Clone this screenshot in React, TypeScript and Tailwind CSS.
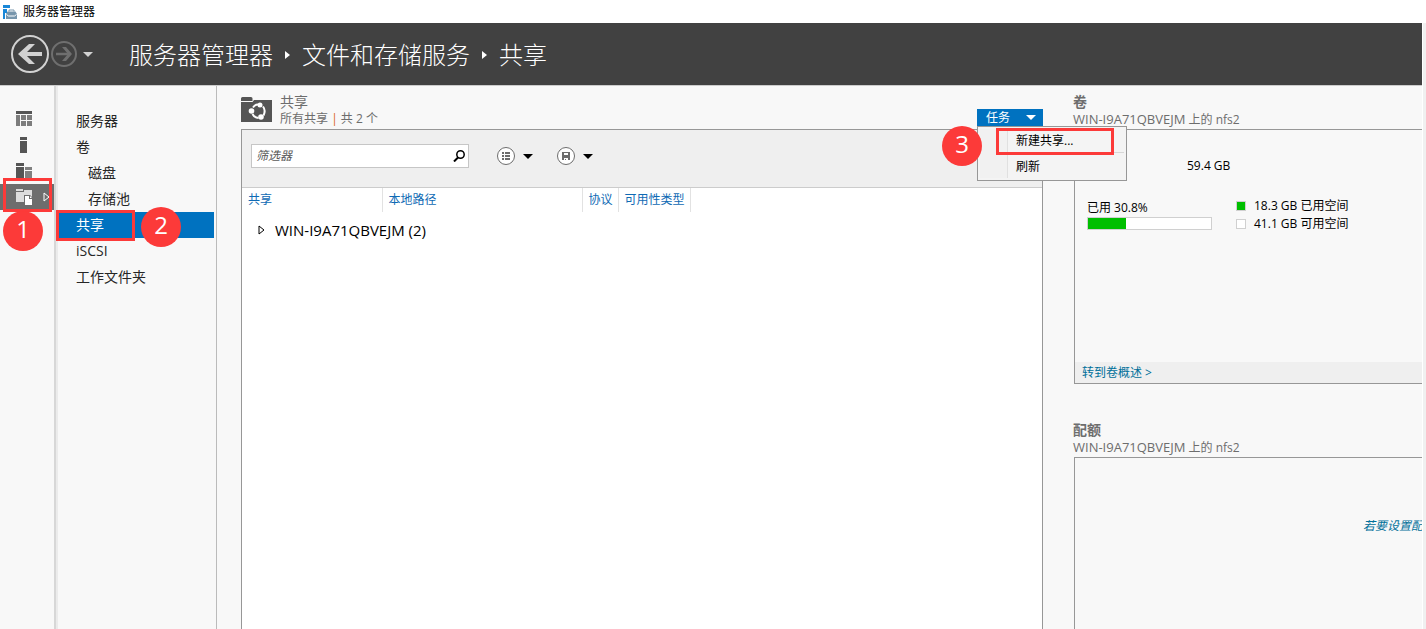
import React, { useState } from 'react';

interface NavItem {
  label: string;
  nested?: boolean;
}

const navItems: NavItem[] = [
  { label: '服务器' },
  { label: '卷' },
  { label: '磁盘', nested: true },
  { label: '存储池', nested: true },
  { label: '共享' },
  { label: 'iSCSI' },
  { label: '工作文件夹' },
];

const AppIcon = () => (
  <svg width="16" height="16" viewBox="0 0 16 16" aria-hidden="true">
    <path d="M1 1h7v3H1zM1 5h4v10H1z" fill="#1a87d7" />
    <path d="M3 15V9h2V6h9v3h1.500v6z" fill="#fff" />
    <path d="M4 10l1.500-2.500h8L15 10v5H4z" fill="#7896ac" />
    <path d="M7 7.500V6h5v1.500" stroke="#7896ac" fill="none" />
    <path d="M4.500 10.500l2 1.500h6l2-1.500" stroke="#fff" fill="none" />
  </svg>
);

const DashboardIcon = () => (
  <svg width="16" height="16" viewBox="0 0 16 16" aria-hidden="true">
    <path d="M0 0h16v3H0z" fill="#555" />
    <path d="M0 4h4v11H0zM5 4h5v5H5zM11 4h5v5h-5zM5 10h5v5H5zM11 10h5v5h-5z" fill="#7d7d7d" />
  </svg>
);

const ServerIcon = () => (
  <svg width="16" height="16" viewBox="0 0 16 16" aria-hidden="true">
    <path d="M4 0h7v3H4zM4 4h7v12H4z" fill="#555" />
  </svg>
);

const AllServersIcon = () => (
  <svg width="16" height="16" viewBox="0 0 16 16" aria-hidden="true">
    <path d="M0 0h8v3H0zM0 4h8v12H0z" fill="#555" />
    <path d="M9 4h7v3H9zM9 8h7v8H9z" fill="#808080" />
  </svg>
);

const StorageIcon = () => (
  <svg width="16" height="16" viewBox="0 0 16 16" aria-hidden="true">
    <path d="M0 0h7v2H0zM0 3h8V1h8v12H0z" fill="#dcdcdc" />
    <path d="M8 6h6l3 3v8H8z" fill="#6d6d6d" />
    <path d="M9 7h4v3h3v6H9z" fill="#fff" />
    <path d="M14 7l2 2h-2z" fill="#fff" />
  </svg>
);

const SharesIcon = () => (
  <svg width="31" height="25" viewBox="0 0 31 25" aria-hidden="true">
    <path d="M0 1.500Q0 0 1.500 0H10q1.500 0 1.500 1.500V4H0zM0 5h11.500l1.500-2h18v22H0z" fill="#555" />
    <g fill="none" stroke="#fff" strokeWidth="2">
      <path d="M12 10.500Q14 7.500 17 7.500" />
      <path d="M22 9.500q3 4 0.500 9" />
      <path d="M11.500 17q2 4 6 4" />
    </g>
    <circle cx="19" cy="8" r="2.500" fill="#fff" />
    <circle cx="10.500" cy="14" r="2.800" fill="#fff" />
    <circle cx="20" cy="20" r="2.800" fill="#fff" />
  </svg>
);

const BackIcon = () => (
  <svg width="38" height="38" viewBox="0 0 38 38" fill="none" aria-hidden="true">
    <circle cx="19" cy="19" r="18" stroke="#d2d2d2" strokeWidth="2" />
    <path d="M9 19h22" stroke="#d2d2d2" strokeWidth="4" />
    <path d="M18 9h6L14 19l10 10h-6L7 19z" fill="#d2d2d2" />
  </svg>
);

const ForwardIcon = () => (
  <svg width="26" height="26" viewBox="0 0 26 26" fill="none" aria-hidden="true">
    <circle cx="13" cy="13" r="12" stroke="#6f6f6f" strokeWidth="2" />
    <path d="M5 13h14" stroke="#6f6f6f" strokeWidth="2.500" />
    <path d="M11 6h4l6 7-6 7h-4l6-7z" fill="#6f6f6f" />
  </svg>
);

const DownArrow = ({ className }: { className?: string }) => (
  <svg width="10" height="5" viewBox="0 0 10 5" className={className} aria-hidden="true">
    <path d="M0 0h10L5 5z" fill="currentColor" />
  </svg>
);

const Crumb = () => (
  <svg width="5" height="8" viewBox="0 0 5 8" className="mx-3" aria-hidden="true">
    <path d="M0 0l5 4-5 4z" fill="#fff" />
  </svg>
);

const Badge = ({ n, className }: { n: number; className: string }) => (
  <span
    className={`absolute z-20 flex size-10 items-center justify-center rounded-full bg-[#fc3a39] pb-1 text-2xl text-white ${className}`}
  >
    {n}
  </span>
);

const PanelHeading = ({ title }: { title: string }) => (
  <div className="h-[35px] shrink-0 text-[#6d6d6d]">
    <h2 className="text-sm/4 font-bold">{title}</h2>
    <p className="text-xs/[18px]">
      <span className="text-[13px]">WIN-I9A71QBVEJM</span> 上的 nfs2
    </p>
  </div>
);

export default function App() {
  const [filter, setFilter] = useState('');
  const [selected, setSelected] = useState('共享');

  return (
    <div className="flex h-screen flex-col overflow-hidden bg-white font-['Open_Sans','Noto_Sans_CJK_SC',sans-serif] text-black">
      {/* Title bar */}
      <div className="flex h-[23px] shrink-0 items-center gap-[5px] pl-[2px] text-xs">
        <AppIcon />
        <span>服务器管理器</span>
      </div>

      <div className="flex min-h-0 flex-1 bg-[#f0f0f0] pr-[3px]">
        <div className="flex min-w-0 flex-1 flex-col border-r border-white">
          {/* Navigation header */}
          <header className="flex h-[62px] shrink-0 items-center bg-[#414141] pl-[11px] text-white">
            <button aria-label="后退"><BackIcon /></button>
            <button aria-label="前进" className="ml-[2px]"><ForwardIcon /></button>
            <button aria-label="历史记录" className="ml-[6px] text-[#d2d2d2]"><DownArrow /></button>
            <nav className="ml-9 flex items-center pt-[2px] text-2xl font-light">
              <a href="#dashboard">服务器管理器</a>
              <Crumb />
              <a href="#storage">文件和存储服务</a>
              <Crumb />
              <a href="#shares">共享</a>
            </nav>
          </header>

          <div className="flex min-h-0 flex-1 border-t border-[#ccc] bg-[#f8f8f8]">
            {/* Icon rail */}
            <div className="relative w-[54px] shrink-0 pt-5">
              <button aria-label="仪表板" className="flex h-[26px] w-full items-center pl-4"><DashboardIcon /></button>
              <button aria-label="本地服务器" className="flex h-[26px] w-full items-center pl-4"><ServerIcon /></button>
              <button aria-label="所有服务器" className="flex h-[26px] w-full items-center pl-4"><AllServersIcon /></button>
              <button aria-label="文件和存储服务" className="flex h-[26px] w-full items-center justify-between bg-[#6d6d6d] pr-1 pl-4">
                <StorageIcon />
                <svg width="7" height="10" viewBox="0 0 7 10" fill="none" aria-hidden="true">
                  <path d="M1 1l5 4-5 4z" stroke="#fff" />
                </svg>
              </button>
              <span className="absolute top-[92px] left-[3px] z-10 h-[34px] w-[49px] border-3 border-[#fc3a39]" />
              <Badge n={1} className="top-[125px] left-[3px]" />
            </div>
            <div className="w-1 shrink-0 border-r-2 border-l-2 border-r-[#ebebeb] border-l-[#d7d7d7]" />

            {/* Side menu */}
            <nav className="relative w-[159px] shrink-0 border-r border-[#bbb] pt-[22px] pr-[2px]">
              {navItems.map((item) => (
                <button
                  key={item.label}
                  onClick={() => setSelected(item.label)}
                  className={`block h-[26px] w-full text-left text-sm ${item.nested ? 'pl-[30px]' : 'pl-[18px]'} ${
                    selected === item.label ? 'bg-[#0072c0] text-white' : 'text-[#262626]'
                  }`}
                >
                  {item.label}
                </button>
              ))}
              <span className="absolute top-[124px] -left-[2px] z-10 h-[31px] w-[79px] border-3 border-[#fc3a39]" />
              <Badge n={2} className="top-[121px] left-[83px]" />
            </nav>

            <div className="flex min-w-0 flex-1 gap-[30px] pt-2 pl-6">
              {/* Shares */}
              <section className="relative flex min-w-0 flex-1 flex-col">
                <div className="flex h-[35px] shrink-0 gap-2">
                  <div className="pt-[3px]"><SharesIcon /></div>
                  <div className="text-[#6d6d6d]">
                    <h2 className="text-sm/4">共享</h2>
                    <p className="text-xs/[18px]">所有共享 <span className="text-[#d9632a]">|</span> 共 2 个</p>
                  </div>
                </div>

                <div className="flex-1 border-x border-t border-[#979797] bg-white">
                  <div className="flex h-[58px] items-start border-b border-[#ccc] bg-[#efefef] pt-[14px] pl-[9px]">
                    <div className="flex h-6 w-[218px] items-center border border-[#c6c6c6] bg-white pr-[3px]">
                      <input
                        aria-label="筛选器"
                        placeholder="筛选器"
                        value={filter}
                        onChange={(e) => setFilter(e.target.value)}
                        className="min-w-0 flex-1 pl-1 text-xs italic outline-none placeholder:text-[#595959]"
                      />
                      <svg width="12" height="12" viewBox="0 0 12 12" fill="none" stroke="#000" aria-hidden="true">
                        <circle cx="7.500" cy="4.500" r="3.700" strokeWidth="1.500" />
                        <path d="M5 7.500L1 11.500" strokeWidth="2" />
                      </svg>
                    </div>
                    <button aria-label="查询条件" className="ml-7 flex h-6 items-center gap-2">
                      <svg width="18" height="18" viewBox="0 0 18 18" aria-hidden="true">
                        <circle cx="9" cy="9" r="8.500" fill="#fff" stroke="#6d6d6d" />
                        <path d="M5 5h2v2H5zM8 5h5v2H8zM5 8h2v2H5zM8 8h5v2H8zM5 11h2v2H5zM8 11h5v2H8z" fill="#6d6d6d" />
                      </svg>
                      <DownArrow />
                    </button>
                    <button aria-label="保存查询" className="ml-6 flex h-6 items-center gap-2">
                      <svg width="18" height="18" viewBox="0 0 18 18" aria-hidden="true">
                        <circle cx="9" cy="9" r="8.500" fill="#fff" stroke="#6d6d6d" />
                        <path d="M5 5h8v8H5z" fill="#6d6d6d" />
                        <path d="M7 6h4v2H7zM7 11h4v2H9v-1H8v1H7z" fill="#fff" />
                      </svg>
                      <DownArrow />
                    </button>
                  </div>

                  <table className="table-fixed">
                    <thead>
                      <tr className="h-6 text-left text-xs text-[#0f6ab4]">
                        <th className="w-[140px] border-r border-[#e2e2e2] p-0 pl-[6px] font-normal">共享</th>
                        <th className="w-[200px] border-r border-[#e2e2e2] p-0 pl-[6px] font-normal">本地路径</th>
                        <th className="w-9 border-r border-[#e2e2e2] p-0 pl-[6px] font-normal whitespace-nowrap">协议</th>
                        <th className="w-[72px] border-r border-[#e2e2e2] p-0 pl-[6px] font-normal whitespace-nowrap">可用性类型</th>
                      </tr>
                    </thead>
                    <tbody>
                      <tr className="h-9">
                        <td colSpan={4} className="p-0 pl-4">
                          <button className="flex items-center gap-[10px] text-[15px]">
                            <svg width="7" height="10" viewBox="0 0 7 10" fill="none" aria-hidden="true">
                              <path d="M1 1l5 4-5 4z" stroke="#000" />
                            </svg>
                            WIN-I9A71QBVEJM (2)
                          </button>
                        </td>
                      </tr>
                    </tbody>
                  </table>
                </div>

                {/* Tasks drop-down */}
                <div className="absolute top-[15px] right-0 z-10">
                  <button className="flex h-[17px] w-[66px] items-center justify-between bg-[#0072c0] pr-[7px] pl-[9px] text-xs text-white">
                    任务 <DownArrow />
                  </button>
                  <div className="absolute top-full left-0 flex h-[55px] w-[150px] border border-[#979797] bg-[#f4f4f4] p-[2px] text-xs">
                    <div className="w-7 border-r border-[#e0e0e0] bg-[#f1f1f1]" />
                    <div className="flex flex-1 flex-col">
                      <button className="flex-1 border-b border-[#d7d7d7] pl-2 text-left">新建共享...</button>
                      <button className="flex-1 pt-[2px] pl-2 text-left">刷新</button>
                    </div>
                    <span className="absolute top-[1px] left-[18px] h-[27px] w-[118px] border-3 border-[#fc3a39]" />
                  </div>
                  <Badge n={3} className="top-[17px] -left-[35px]" />
                </div>
              </section>

              {/* Volume and quota */}
              <aside className="flex w-[349px] shrink-0 flex-col">
                <PanelHeading title="卷" />
                <div className="ml-px flex h-[255px] shrink-0 flex-col border-y border-l border-[#979797] text-xs">
                  <div className="flex-1 pt-7 pl-3">
                    <p className="pl-[100px] leading-4">59.4 GB</p>
                    <div className="mt-[23px] flex items-start gap-6">
                      <div className="w-[125px] pt-[3px]">
                        <p className="leading-4">已用 30.8%</p>
                        <div className="mt-px h-[13px] border border-[#d0d0d0] bg-white">
                          <div className="h-full bg-[#00bf00]" style={{ width: '30.8%' }} />
                        </div>
                      </div>
                      <ul className="leading-[18px]">
                        <li className="flex items-center gap-2">
                          <span className="size-[10px] border border-[#d0d0d0] bg-[#00bf00]" />18.3 GB 已用空间
                        </li>
                        <li className="flex items-center gap-2">
                          <span className="size-[10px] border border-[#d0d0d0] bg-white" />41.1 GB 可用空间
                        </li>
                      </ul>
                    </div>
                  </div>
                  <div className="flex h-[21px] items-center bg-[#efefef] pl-[7px]">
                    <a href="#volumes" className="text-[#00709a]">转到卷概述 &gt;</a>
                  </div>
                </div>

                <div className="mt-[38px]">
                  <PanelHeading title="配额" />
                </div>
                <div className="ml-px flex-1 overflow-hidden border-t border-l border-[#979797] pt-[60px] pl-[288px] text-xs">
                  <a href="#quota" className="whitespace-nowrap text-[#00709a] italic">若要设置配额</a>
                </div>
              </aside>
            </div>
          </div>
        </div>
      </div>
    </div>
  );
}
